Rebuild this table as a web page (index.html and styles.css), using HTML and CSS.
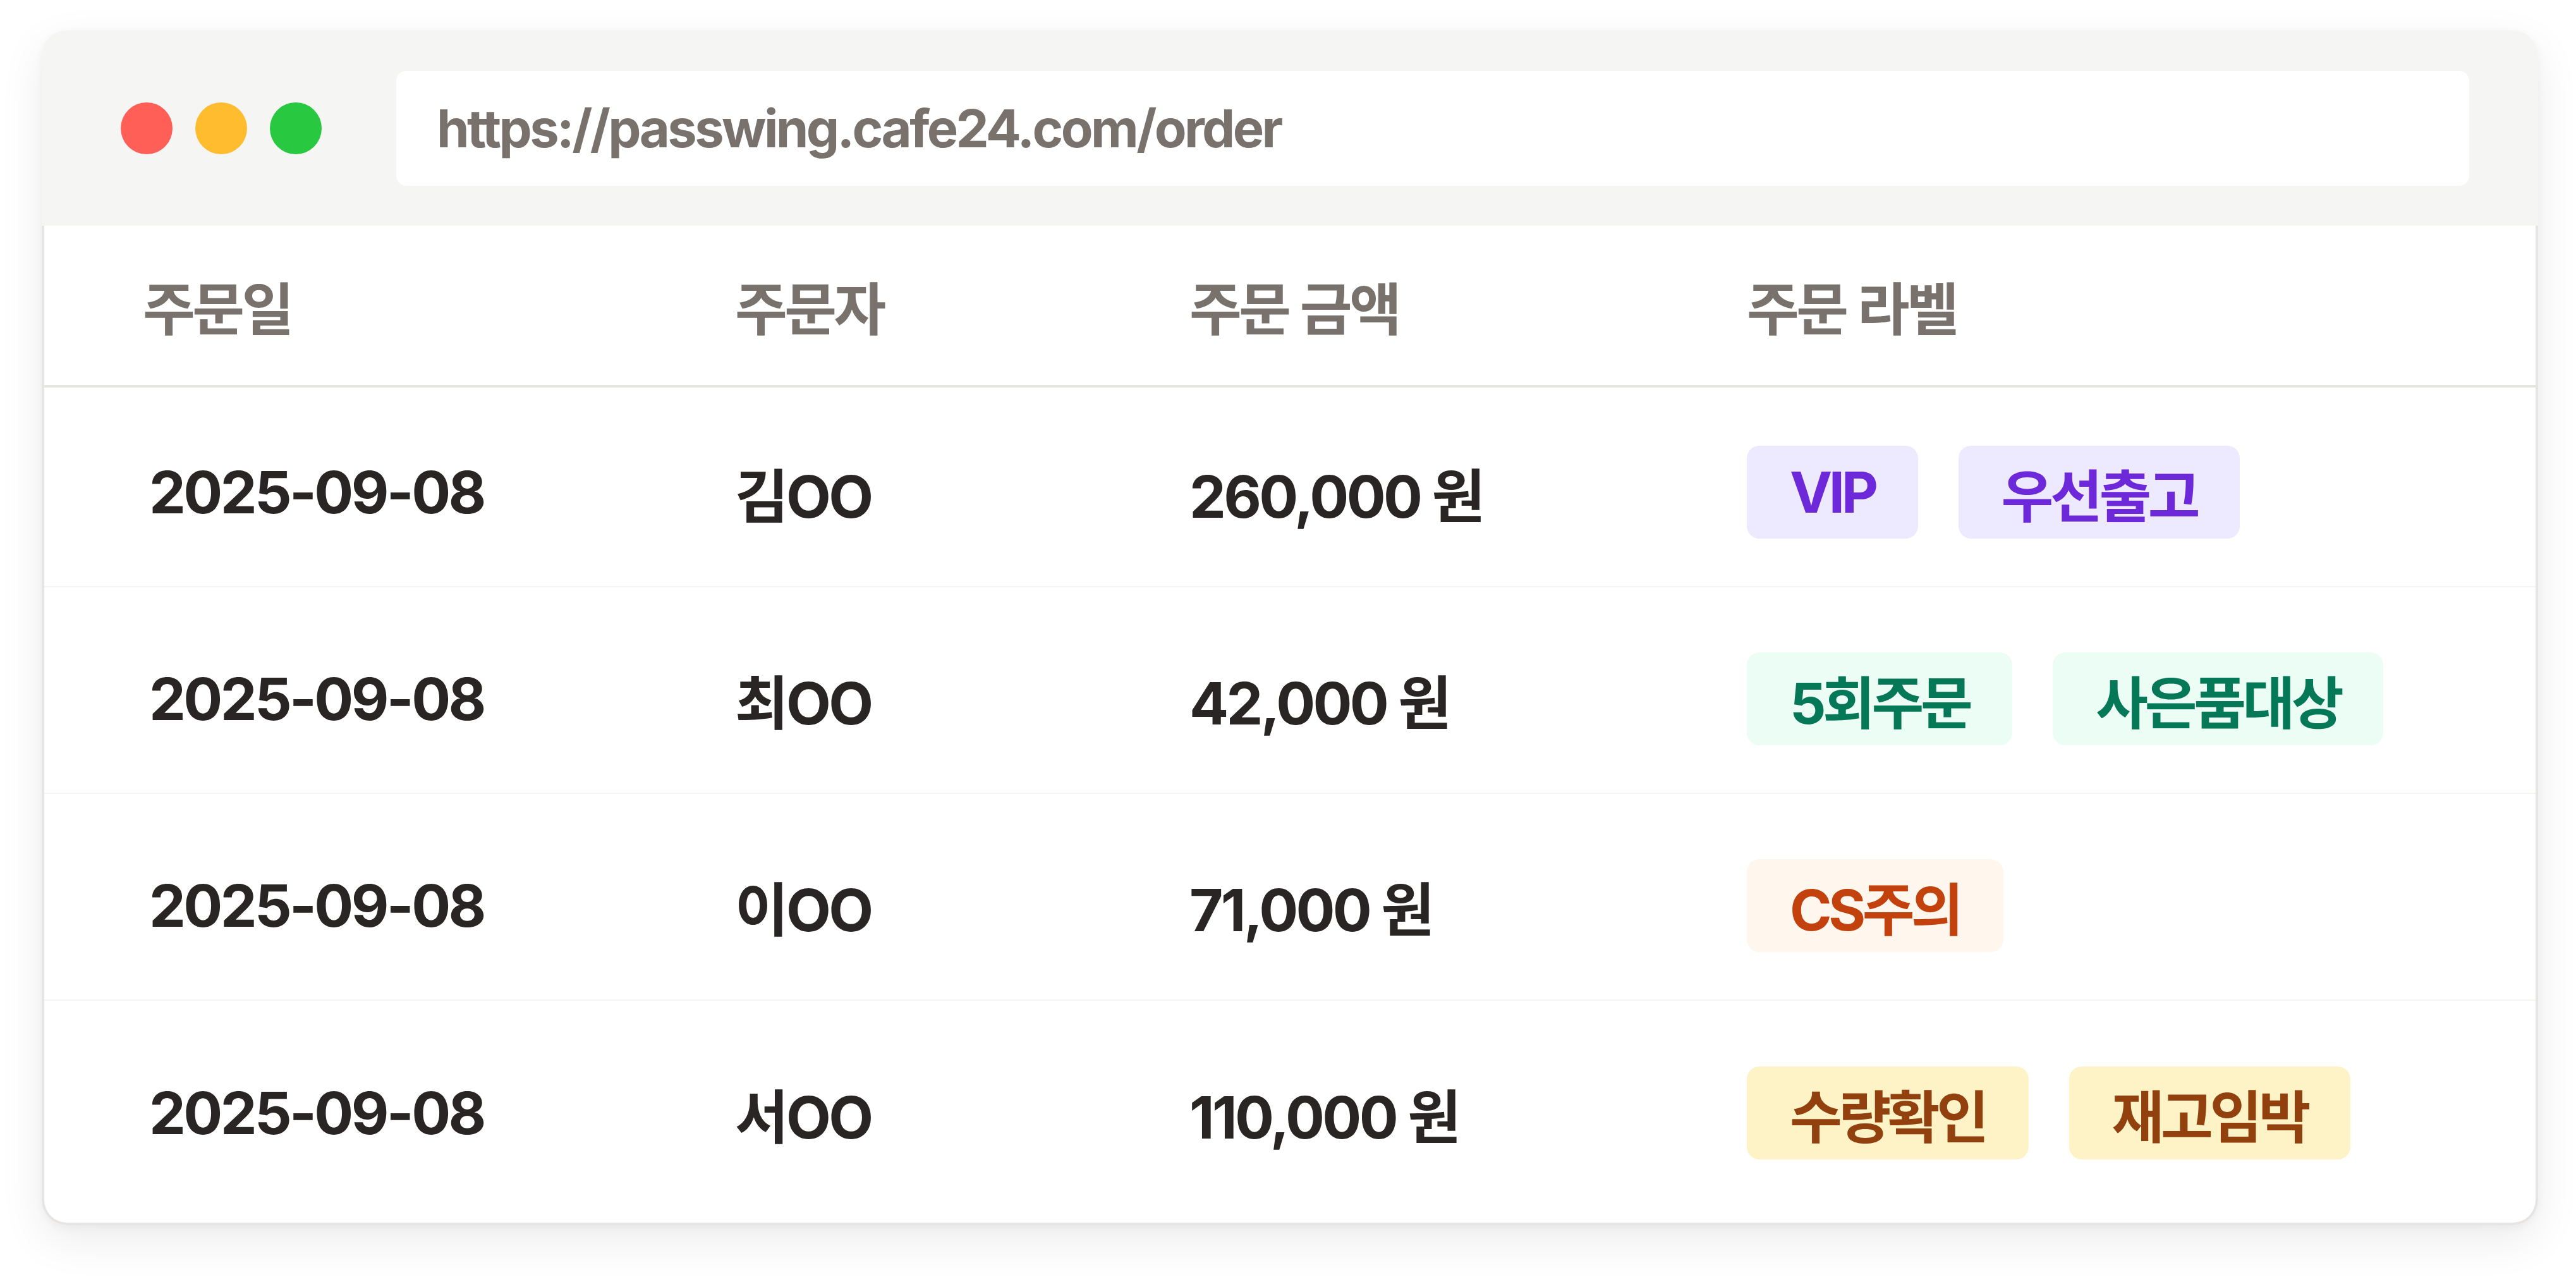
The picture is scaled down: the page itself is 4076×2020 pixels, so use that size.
FILE: index.html
```html
<!DOCTYPE html>
<html lang="ko">
<head>
<meta charset="utf-8">
<title>주문 목록</title>
<link rel="stylesheet" href="styles.css">
</head>
<body>
<div class="page">
  <div class="window">
    <div class="titlebar">
      <div class="lights">
        <span class="light light-red"></span>
        <span class="light light-yellow"></span>
        <span class="light light-green"></span>
      </div>
      <div class="urlbar">https://passwing.cafe24.com/order</div>
    </div>
    <div class="content">
      <div class="row head">
        <div class="cell">주문일</div>
        <div class="cell">주문자</div>
        <div class="cell">주문 금액</div>
        <div class="cell">주문 라벨</div>
      </div>
      <div class="row data">
        <div class="cell date">2025-09-08</div>
        <div class="cell">김OO</div>
        <div class="cell">260,000 원</div>
        <div class="cell tags"><span class="tag violet">VIP</span><span class="tag violet">우선출고</span></div>
      </div>
      <div class="row data">
        <div class="cell date">2025-09-08</div>
        <div class="cell">최OO</div>
        <div class="cell">42,000 원</div>
        <div class="cell tags"><span class="tag green">5회주문</span><span class="tag green">사은품대상</span></div>
      </div>
      <div class="row data">
        <div class="cell date">2025-09-08</div>
        <div class="cell">이OO</div>
        <div class="cell">71,000 원</div>
        <div class="cell tags"><span class="tag orange">CS주의</span></div>
      </div>
      <div class="row data">
        <div class="cell date">2025-09-08</div>
        <div class="cell">서OO</div>
        <div class="cell">110,000 원</div>
        <div class="cell tags"><span class="tag amber">수량확인</span><span class="tag amber">재고임박</span></div>
      </div>
    </div>
  </div>
</div>
</body>
</html>
```

FILE: styles.css
```css
html, body {
  margin: 0;
  padding: 0;
  background: #ffffff;
}

body {
  font-family: Inter, "Noto Sans CJK KR", sans-serif;
}

.page {
  padding: 48px 60px 86px 66px;
}

.window {
  width: 3950px;
  border-radius: 40px;
  background: #ffffff;
  box-shadow: 0 24px 70px rgba(0, 0, 0, 0.08), 0 4px 14px rgba(0, 0, 0, 0.04);
}

.titlebar {
  height: 309px;
  box-sizing: border-box;
  background: #f5f5f4;
  border-radius: 40px 40px 0 0;
  display: flex;
  align-items: center;
  padding: 0 109px 0 125px;
}

.lights {
  display: flex;
  gap: 36px;
  margin-right: 118px;
}

.light {
  width: 82px;
  height: 82px;
  border-radius: 50%;
}

.light-red { background: #ff5f57; }
.light-yellow { background: #febc2e; }
.light-green { background: #28c840; }

.urlbar {
  flex: 1;
  height: 182px;
  box-sizing: border-box;
  background: #ffffff;
  border-radius: 16px;
  display: flex;
  align-items: center;
  padding-left: 64px;
  font-size: 83px;
  font-weight: 700;
  letter-spacing: -0.044em;
  color: #78716c;
}

.content {
  border: 4px solid #e7e5e4;
  border-top: none;
  border-radius: 0 0 40px 40px;
  padding-bottom: 24px;
}

.row {
  display: grid;
  grid-template-columns: 937px 719px 882px 1fr;
  padding-left: 156px;
  box-sizing: border-box;
  align-items: center;
}

.head {
  height: 256px;
  border-bottom: 4px solid #e7e5e4;
  font-size: 90px;
  font-weight: 600;
  letter-spacing: -0.05em;
  color: #78716c;
}

.data {
  height: 327px;
  padding-top: 28px;
  border-bottom: 2px solid #f5f5f4;
  font-size: 92px;
  font-weight: 700;
  letter-spacing: -0.04em;
  color: #292524;
}

.head + .data {
  height: 316px;
  padding-top: 17px;
}

.data:last-child {
  border-bottom: none;
}

.date {
  padding-left: 10px;
}

.tags {
  display: flex;
  gap: 64px;
}

.tag {
  display: inline-flex;
  align-items: center;
  height: 147px;
  padding: 0 68px;
  border-radius: 20px;
  font-size: 90px;
  font-weight: 700;
  letter-spacing: -0.06em;
}

.violet { background: #ede9fe; color: #6d28d9; }
.green { background: #ecfdf5; color: #047857; }
.orange { background: #fff7ed; color: #c2410c; }
.amber { background: #fef3c7; color: #92400e; }
```
